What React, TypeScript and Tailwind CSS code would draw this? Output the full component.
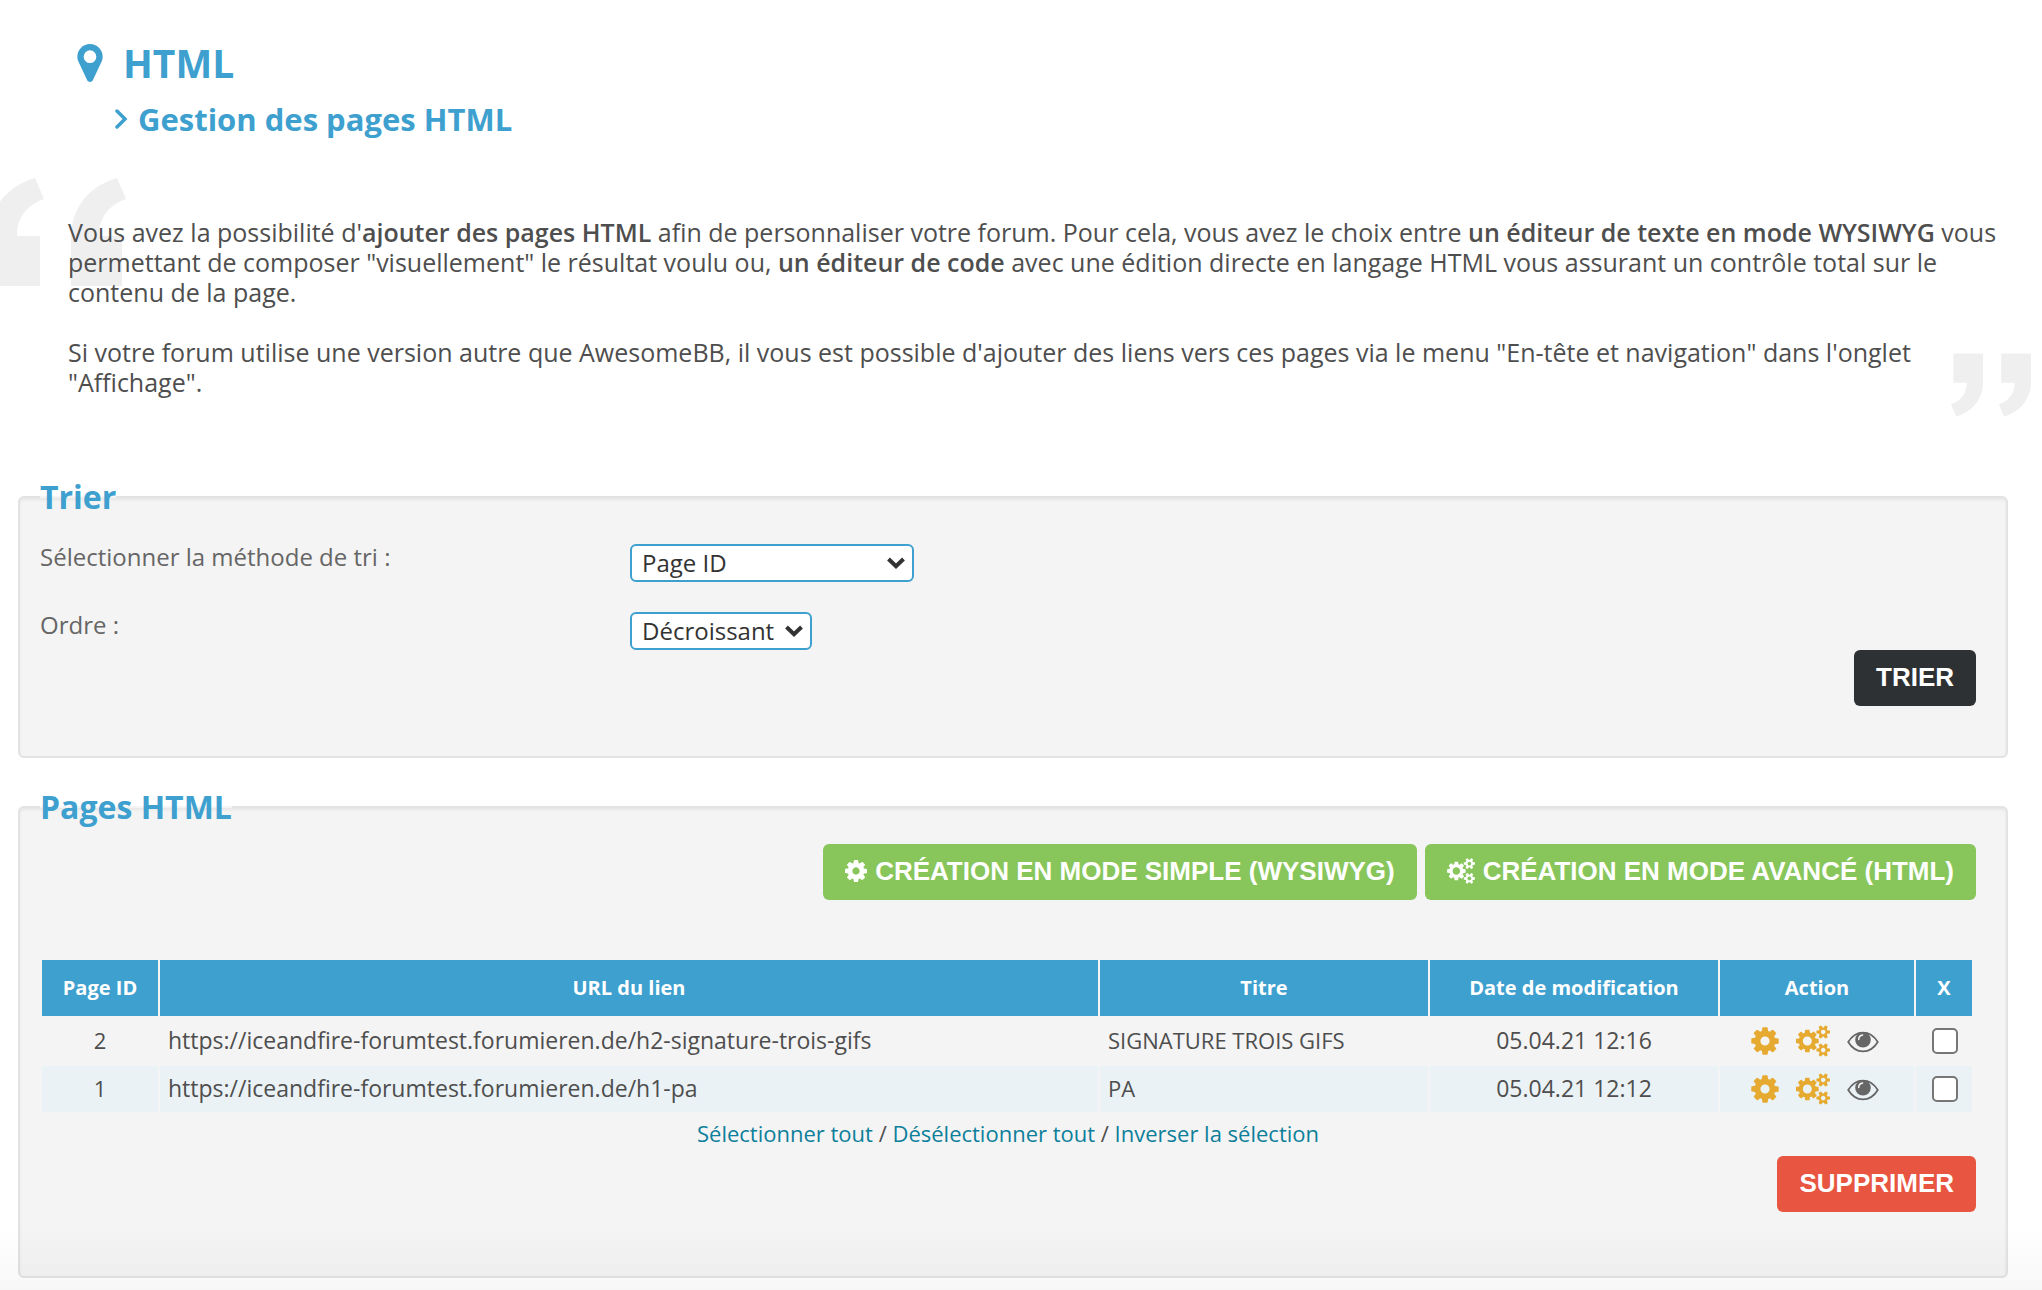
import React, { useState } from 'react';
import clsx from 'clsx';

interface HtmlPage {
    id: number;
    url: string;
    title: string;
    date: string;
}

interface IconProps {
    className?: string;
}

const pages: HtmlPage[] = [
    { id: 2, url: 'https://iceandfire-forumtest.forumieren.de/h2-signature-trois-gifs', title: 'SIGNATURE TROIS GIFS', date: '05.04.21 12:16' },
    { id: 1, url: 'https://iceandfire-forumtest.forumieren.de/h1-pa', title: 'PA', date: '05.04.21 12:12' },
];

function MarkerIcon({ className }: IconProps) {
    return (
        <svg viewBox="384 128 1024 1536" fill="currentColor" className={className} aria-hidden="true">
            <path d="M1152 640q0-106-75-181t-181-75-181 75-75 181 75 181 181 75 181-75 75-181zm256 0q0 109-33 179l-364 774q-16 33-47.5 52t-67.5 19-67.5-19-46.5-52l-365-774q-33-70-33-179 0-212 150-362t362-150 362 150 150 362z" />
        </svg>
    );
}

function CogIcon({ className }: IconProps) {
    return (
        <svg viewBox="128 0 1536 1792" fill="currentColor" className={className} aria-hidden="true">
            <path d="M1152 896q0-106-75-181t-181-75-181 75-75 181 75 181 181 75 181-75 75-181zm512-109v222q0 12-8 23t-20 13l-185 28q-19 54-39 91 35 50 107 138 10 12 10 25t-9 23q-27 37-99 108t-94 71q-12 0-26-9l-138-108q-44 23-91 38-16 136-29 186-7 28-36 28h-222q-14 0-24.5-8.5t-11.5-21.5l-28-184q-49-16-90-37l-141 107q-10 9-25 9-14 0-25-11-126-114-165-168-7-10-7-23 0-12 8-23 15-21 51-66.5t54-70.5q-27-50-41-99l-183-27q-13-2-21-12.5t-8-23.5v-222q0-12 8-23t19-13l186-28q14-46 39-92-40-57-107-138-10-12-10-24 0-10 9-23 26-36 98.5-107.5t94.5-71.5q13 0 26 10l138 107q44-23 91-38 16-136 29-186 7-28 36-28h222q14 0 24.5 8.5t11.5 21.5l28 184q49 16 90 37l142-107q9-9 24-9 13 0 25 10 129 119 165 170 7 8 7 22 0 12-8 23-15 21-51 66.5t-54 70.5q26 50 41 98l183 28q13 2 21 12.5t8 23.5z" />
        </svg>
    );
}

function CogsIcon({ className }: IconProps) {
    return (
        <svg viewBox="0 0 1920 1792" fill="currentColor" className={className} aria-hidden="true">
            <path d="M896 896q0-106-75-181t-181-75-181 75-75 181 75 181 181 75 181-75 75-181zm768 512q0-52-38-90t-90-38-90 38-38 90q0 53 37.5 90.5t90.5 37.5 90.5-37.5 37.5-90.5zm0-1024q0-52-38-90t-90-38-90 38-38 90q0 53 37.5 90.5t90.5 37.5 90.5-37.5 37.5-90.5zm-384 421v185q0 10-7 19.5t-16 10.5l-155 24q-11 35-32 76 34 48 90 115 7 11 7 20 0 12-7 19-23 30-82.5 89.5t-78.5 59.5q-11 0-21-7l-115-90q-37 19-77 31-11 108-23 155-7 24-30 24h-186q-11 0-20-7.5t-10-17.5l-23-153q-34-10-75-31l-118 89q-7 7-20 7-11 0-21-8-144-133-144-160 0-9 7-19 10-14 41-53t47-61q-23-44-35-82l-152-24q-10-1-17-9.5t-7-19.5v-185q0-10 7-19.5t16-10.5l155-24q11-35 32-76-34-48-90-115-7-11-7-20 0-12 7-20 22-30 82-89t79-59q11 0 21 7l115 90q34-18 77-32 11-108 23-154 7-24 30-24h186q11 0 20 7.5t10 17.5l23 153q34 10 75 31l118-89q8-7 20-7 11 0 21 8 144 133 144 160 0 8-7 19-12 16-42 54t-45 60q23 48 34 82l152 23q10 2 17 10.5t7 19.5zm640 533v140q0 16-149 31-12 27-30 52 51 113 51 138 0 4-4 7-122 71-124 71-8 0-46-47t-52-68q-20 2-30 2t-30-2q-14 21-52 68t-46 47q-2 0-124-71-4-3-4-7 0-25 51-138-18-25-30-52-149-15-149-31v-140q0-16 149-31 13-29 30-52-51-113-51-138 0-4 4-7 4-2 35-20t59-34 30-16q8 0 46 46.5t52 67.5q20-2 30-2t30 2q51-71 92-112l6-2q4 0 124 70 4 3 4 7 0 25-51 138 17 23 30 52 149 15 149 31zm0-1024v140q0 16-149 31-12 27-30 52 51 113 51 138 0 4-4 7-122 71-124 71-8 0-46-47t-52-68q-20 2-30 2t-30-2q-14 21-52 68t-46 47q-2 0-124-71-4-3-4-7 0-25 51-138-18-25-30-52-149-15-149-31v-140q0-16 149-31 13-29 30-52-51-113-51-138 0-4 4-7 4-2 35-20t59-34 30-16q8 0 46 46.5t52 67.5q20-2 30-2t30 2q51-71 92-112l6-2q4 0 124 70 4 3 4 7 0 25-51 138 17 23 30 52 149 15 149 31z" />
        </svg>
    );
}

function EyeIcon({ className }: IconProps) {
    return (
        <svg viewBox="0 0 32 32" className={className} aria-hidden="true">
            <path d="M1.2 17Q7 7.6 16 7.6T30.8 17Q25 26.4 16 26.4T1.2 17Z" fill="none" stroke="currentColor" strokeWidth="1.8" strokeLinejoin="round" />
            <circle cx="16" cy="14.8" r="7.8" fill="currentColor" />
            <path d="M11.7 14.5Q11.9 10.6 15.6 10.1" fill="none" stroke="#f4f4f4" strokeWidth="1.5" strokeLinecap="round" />
        </svg>
    );
}

function QuoteMark({ className }: IconProps) {
    return (
        <svg viewBox="0 0 137 108" fill="#efefef" className={className} aria-hidden="true">
            <path d="M46 0L55 21C40 26 28 38 28 58H51V108H0V60C0 30 18 8 46 0Z" />
            <path d="M128 0L137 21C122 26 110 38 110 58H133V108H82V60C82 30 100 8 128 0Z" />
        </svg>
    );
}

interface PanelProps {
    title: string;
    className?: string;
    children: React.ReactNode;
}

function Panel({ title, className, children }: PanelProps) {
    return (
        <fieldset className={clsx('border-2 border-[#e3e3e3] rounded-md bg-[#f4f4f4] pl-5 pr-[30px] shadow-[inset_0_2px_3px_rgba(0,0,0,0.06)]', className)}>
            <legend className="font-bold text-[32px] leading-10 text-[#3ea0cf]">{title}</legend>
            {children}
        </fieldset>
    );
}

interface SortSelectProps {
    id: string;
    label: string;
    options: string[];
    className?: string;
}

function SortSelect({ id, label, options, className }: SortSelectProps) {
    return (
        <div className="flex items-start">
            <label htmlFor={id} className="w-[590px] shrink-0 text-[24px] leading-[26px] text-[#666]">{label}</label>
            <div className={clsx('relative', className)}>
                <select id={id} className="appearance-none w-full h-[38px] pl-2.5 pr-8 bg-white border-2 border-[#3ea0cf] rounded-md text-[24px] leading-[30px] text-[#333]">
                    {options.map((o) => (
                        <option key={o}>{o}</option>
                    ))}
                </select>
                <svg viewBox="0 0 18 12" className="absolute right-[9px] top-[13px] w-[18px] h-3 pointer-events-none" aria-hidden="true">
                    <path d="M1.5 2L9 9.2L16.5 2" fill="none" stroke="#333" strokeWidth="4" />
                </svg>
            </div>
        </div>
    );
}

const btn = "h-14 px-[22px] pb-0.5 rounded-md text-white font-['Liberation_Sans',Arial,sans-serif] font-bold text-[26px] leading-[30px] cursor-pointer";
const th = 'h-14 bg-[#3ea0cf] text-white font-bold text-[20px] leading-[26px] text-center p-0';

export default function App() {
    const [checked, setChecked] = useState<number[]>([]);

    const toggle = (id: number) =>
        setChecked((prev) => (prev.includes(id) ? prev.filter((x) => x !== id) : [...prev, id]));

    const selectAll = () => setChecked(pages.map((p) => p.id));
    const selectNone = () => setChecked([]);
    const invert = () => setChecked((prev) => pages.map((p) => p.id).filter((id) => !prev.includes(id)));

    return (
        <div className="relative min-h-screen overflow-hidden bg-white pl-[18px] pr-[34px] pb-3 font-['Open_Sans',sans-serif] text-[#4e4e4e]">
            {/* Heading */}
            <header className="pt-[35px] text-[#3ea0cf] font-bold">
                <h1 className="flex items-center gap-5 pl-[59px] text-[39px] leading-[56px]">
                    <MarkerIcon className="w-[26px] h-[38px]" />
                    HTML
                </h1>
                <h2 className="flex items-center gap-2.5 pl-24 text-[31px] leading-[56px]">
                    <svg viewBox="0 0 14 20" className="w-3.5 h-5" aria-hidden="true">
                        <path d="M3 2L11 10L3 18" fill="none" stroke="currentColor" strokeWidth="3.5" strokeLinecap="round" />
                    </svg>
                    Gestion des pages HTML
                </h2>
            </header>

            {/* Intro */}
            <section className="relative mt-[70px] pl-[50px] text-[25px] leading-[30px]">
                <QuoteMark className="absolute -left-[29px] -top-[39px] w-[137px] h-[108px]" />
                <QuoteMark className="absolute -right-[23px] top-[135px] w-20 h-[66px] rotate-180" />
                <p className="relative -mr-4">
                    Vous avez la possibilité d'<b className="font-semibold">ajouter des pages HTML</b> afin de personnaliser votre forum. Pour cela, vous avez le choix entre <b className="font-semibold">un éditeur de texte en mode WYSIWYG</b> vous permettant de composer "visuellement" le résultat voulu ou, <b className="font-semibold">un éditeur de code</b> avec une édition directe en langage HTML vous assurant un contrôle total sur le contenu de la page.
                </p>
                <p className="relative -mr-4 mt-[30px]">
                    Si votre forum utilise une version autre que AwesomeBB, il vous est possible d'ajouter des liens vers ces pages via le menu "En-tête et navigation" dans l'onglet "Affichage".
                </p>
            </section>

            {/* Sorting */}
            <form className="mt-20" onSubmit={(e) => e.preventDefault()}>
                <Panel title="Trier" className="pt-[27px] pb-[50px]">
                    <div className="flex flex-col gap-[30px]">
                        <SortSelect id="sort" label="Sélectionner la méthode de tri :" options={['Page ID', 'Titre', 'Date de modification']} className="w-[284px]" />
                        <SortSelect id="order" label="Ordre :" options={['Décroissant', 'Croissant']} className="w-[182px]" />
                    </div>
                    <div className="flex justify-end">
                        <button type="submit" className={clsx(btn, 'bg-[#2d3134]')}>TRIER</button>
                    </div>
                </Panel>
            </form>

            {/* Page list */}
            <Panel title="Pages HTML" className="mt-[29px] pt-[17px] pb-16">
                <div className="flex justify-end gap-2">
                    <button type="button" className={clsx(btn, 'flex items-center gap-2 bg-[#88c65b]')}>
                        <CogIcon className="w-[22px] h-[26px]" />
                        CRÉATION EN MODE SIMPLE (WYSIWYG)
                    </button>
                    <button type="button" className={clsx(btn, 'flex items-center gap-2 bg-[#88c65b]')}>
                        <CogsIcon className="w-7 h-[26px]" />
                        CRÉATION EN MODE AVANCÉ (HTML)
                    </button>
                </div>

                <div className="mt-[58px] pr-0.5">
                    <table className="w-full table-fixed border-separate border-spacing-0.5 text-[22px] leading-[30px]">
                        <colgroup>
                            <col className="w-[116px]" />
                            <col />
                            <col className="w-[328px]" />
                            <col className="w-[288px]" />
                            <col className="w-[194px]" />
                            <col className="w-14" />
                        </colgroup>
                        <thead>
                            <tr>
                                <th className={th}>Page ID</th>
                                <th className={th}>URL du lien</th>
                                <th className={th}>Titre</th>
                                <th className={th}>Date de modification</th>
                                <th className={th}>Action</th>
                                <th className={th}>X</th>
                            </tr>
                        </thead>
                        <tbody>
                            {pages.map((page) => (
                                <tr key={page.id} className="h-[46px] even:bg-[#eaf2f6]">
                                    <td className="pb-0.5 text-center">{page.id}</td>
                                    <td className="px-2 pb-0.5 text-[23px]">{page.url}</td>
                                    <td className="px-2 pb-0.5">{page.title}</td>
                                    <td className="pb-0.5 text-center text-[23px]">{page.date}</td>
                                    <td className="pr-1">
                                        <div className="flex items-center justify-center gap-[17px]">
                                            <a href="#" aria-label="Mode simple" className="text-[#e6aa30]"><CogIcon className="w-7 h-8" /></a>
                                            <a href="#" aria-label="Mode avancé" className="text-[#e6aa30]"><CogsIcon className="w-[34px] h-8" /></a>
                                            <a href="#" aria-label="Prévisualiser" className="text-[#666]"><EyeIcon className="w-8 h-8" /></a>
                                        </div>
                                    </td>
                                    <td className="pl-0.5">
                                        <input
                                            type="checkbox"
                                            aria-label={page.title}
                                            checked={checked.includes(page.id)}
                                            onChange={() => toggle(page.id)}
                                            className="block mx-auto appearance-none w-[26px] h-[26px] bg-white border-2 border-[#767676] rounded-[5px] checked:bg-[#3ea0cf]"
                                        />
                                    </td>
                                </tr>
                            ))}
                        </tbody>
                    </table>
                </div>

                <div className="mt-1 text-center text-[22px] leading-[30px]">
                    <a href="#" onClick={selectAll} className="text-[#0d7f9b]">Sélectionner tout</a>
                    {' / '}
                    <a href="#" onClick={selectNone} className="text-[#0d7f9b]">Désélectionner tout</a>
                    {' / '}
                    <a href="#" onClick={invert} className="text-[#0d7f9b]">Inverser la sélection</a>
                </div>

                <div className="mt-2 flex justify-end">
                    <button type="button" className={clsx(btn, 'bg-[#e85541]')}>SUPPRIMER</button>
                </div>
            </Panel>

            {/* Soft shade along the bottom edge */}
            <div className="absolute inset-x-0 bottom-0 h-16 bg-linear-to-b from-transparent to-black/3 pointer-events-none" />
        </div>
    );
}
